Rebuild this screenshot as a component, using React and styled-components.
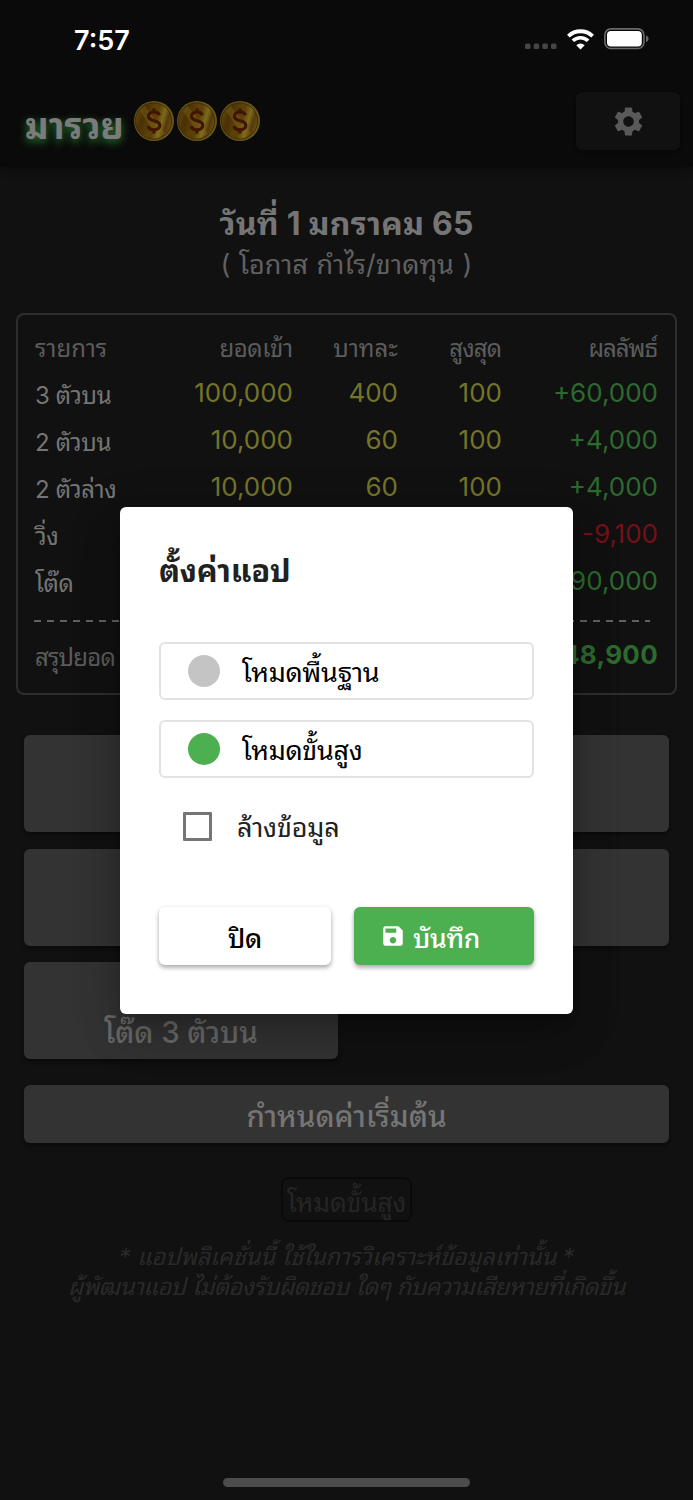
import React from "react";
import styled, { createGlobalStyle } from "styled-components";
import { MdSettings, MdSave } from "react-icons/md";

const fontStack = `Inter, "Noto Sans Thai Looped", "Loma", "Garuda", "Waree", "Noto Sans Thai", sans-serif`;

const Global = createGlobalStyle`
  * { box-sizing: border-box; }
  body { margin: 0; background: #111; }
`;

const Screen = styled.div`
  position: relative;
  width: 693px;
  height: 1500px;
  overflow: hidden;
  background: #111;
  color: #757575;
  font-family: ${fontStack};
  display: flex;
  flex-direction: column;
  white-space: nowrap;
`;

const Header = styled.header`
  height: 167px;
  flex: none;
  background: #0a0a0a;
  box-shadow: 0 3px 8px rgba(0, 0, 0, 0.35);
`;

const StatusBar = styled.div`
  height: 78px;
  padding: 0 44px 0 74px;
  display: flex;
  align-items: center;
  justify-content: space-between;
`;

const Clock = styled.div`
  margin-top: 3px;
  font-size: 27px;
  line-height: 32px;
  font-weight: 600;
  color: #fff;
`;

const StatusIcons = styled.div`
  display: flex;
  align-items: center;
`;

const AppBar = styled.div`
  height: 86px;
  padding: 0 13px 0 25px;
  display: flex;
  align-items: center;
`;

const Brand = styled.h1`
  margin: 9px 0 0;
  width: 109px;
  font-size: 36px;
  line-height: 40px;
  font-weight: 700;
  color: #7b7b7b;
  text-shadow: 0 3px 9px #2c7a30;
`;

const Coins = styled.div`
  display: flex;
  gap: 3px;
  flex: 1;
`;

const SettingsButton = styled.button`
  width: 104px;
  height: 58px;
  border: 0;
  border-radius: 6px;
  background: #111;
  color: #595959;
  display: grid;
  place-items: center;
  box-shadow: 0 2px 3px rgba(0, 0, 0, 0.3);
`;

const Heading = styled.div`
  margin-top: 35px;
  text-align: center;
`;

const DateTitle = styled.h2`
  margin: 0;
  font-size: 32px;
  line-height: 43px;
  font-weight: 700;
  letter-spacing: 0.2px;
`;

const Subtitle = styled.div`
  font-size: 27px;
  line-height: 40px;
  color: #606060;
  word-spacing: 1px;
`;

const Card = styled.section`
  margin: 28px 16px 0;
  width: 661px;
  height: 382px;
  flex: none;
  padding: 10px 16px;
  border: 2px solid #2e2e2e;
  border-radius: 8px;
`;

const Row = styled.div`
  height: ${(p) => (p.$head ? 41 : 47)}px;
  display: grid;
  grid-template-columns: 120px 139px 105px 104px 156px;
  align-items: center;
  text-align: right;
  font-size: 26px;
  line-height: 47px;
  color: ${(p) => (p.$head ? "#5c5c5c" : "#757575")};
`;

const Label = styled.span`
  text-align: left;
  font-size: 24px;
  padding: ${(p) => p.$drop ?? 6}px 0 0 1px;
  color: ${(p) => p.$color || "inherit"};
  letter-spacing: ${(p) => p.$spacing ?? -0.35}px;
`;

const HeadCell = styled.span`
  font-size: 24px;
  margin-right: ${(p) => -(p.$spacing || 0)}px;
  letter-spacing: ${(p) => p.$spacing || 0}px;
`;

const Amount = styled.span`
  color: #74742a;
`;

const Result = styled.span`
  color: ${(p) => (p.$loss ? "#751018" : "#2c6a2e")};
  font-weight: ${(p) => (p.$bold ? 700 : 400)};
  letter-spacing: ${(p) => (p.$bold ? 0.3 : 0)}px;
`;

const Dashes = styled.div`
  height: 2px;
  margin: 19px 0 6px;
  width: 616px;
  background: repeating-linear-gradient(90deg, #616161 0 7px, transparent 7px 13px);
`;

const Tiles = styled.div`
  margin: 40px 24px 0;
  display: grid;
  grid-template-columns: 314px 314px;
  justify-content: space-between;
  grid-auto-rows: 97px;
  gap: 16.5px;
`;

const Tile = styled.button`
  border: 0;
  border-radius: 6px;
  padding: 41px 0 0;
  background: #333;
  color: #6a6a6a;
  font: 500 29.5px/58px ${fontStack};
  letter-spacing: -0.1px;
  box-shadow: 0 3px 4px rgba(0, 0, 0, 0.4);
`;

const WideButton = styled.button`
  flex: none;
  margin: 26px 24px 0;
  height: 58px;
  border: 0;
  border-radius: 6px;
  padding: 2px 0 0;
  background: #333;
  color: #757575;
  font: 500 29.5px/58px ${fontStack};
  box-shadow: 0 3px 4px rgba(0, 0, 0, 0.4);
`;

const ModeBadge = styled.div`
  align-self: center;
  flex: none;
  margin-top: 34px;
  width: 131px;
  height: 45px;
  border: 2px solid #0a0a0a;
  border-radius: 8px;
  font-size: 26.5px;
  letter-spacing: -0.2px;
  line-height: 47px;
  text-align: center;
  color: #252525;
`;

const Disclaimer = styled.p`
  margin: 20px 0 0;
  text-align: center;
  font-size: 23.5px;
  line-height: 30px;
  font-style: italic;
  color: #292929;
`;

const DisclaimerLine = styled.span`
  display: block;
  letter-spacing: ${(p) => p.$spacing || 0}px;
`;

const HomeIndicator = styled.div`
  margin: auto auto 13px;
  width: 247px;
  height: 9px;
  border-radius: 5px;
  background: #4c4c4c;
`;

const Dialog = styled.div`
  position: absolute;
  left: 120px;
  top: 507px;
  width: 453px;
  height: 507px;
  padding: 39px;
  border-radius: 6px;
  background: #fff;
  color: #000;
  display: flex;
  flex-direction: column;
  box-shadow: 0 11px 15px -7px rgba(0, 0, 0, 0.2), 0 24px 38px 3px rgba(0, 0, 0, 0.14),
    0 9px 46px 8px rgba(0, 0, 0, 0.12);
`;

const DialogTitle = styled.h3`
  margin: 0 0 46px;
  font-size: 31px;
  letter-spacing: -0.15px;
  line-height: 50px;
  font-weight: 700;
  color: #212121;
`;

const Option = styled.div`
  height: 58px;
  margin-bottom: 20px;
  padding-left: 27px;
  border: 2px solid #e2e2e2;
  border-radius: 6px;
  display: flex;
  align-items: center;
  gap: 22px;
  font-size: 27px;
  letter-spacing: -0.35px;
  line-height: 50px;
`;

const OptionText = styled.span`
  padding-top: 4px;
`;

const Dot = styled.span`
  width: 32px;
  height: 32px;
  border-radius: 50%;
  background: ${(p) => (p.$on ? "#4caf50" : "#c4c4c4")};
`;

const CheckRow = styled.label`
  height: 56px;
  padding-left: 24px;
  display: flex;
  align-items: center;
  gap: 25px;
  font-size: 27px;
  letter-spacing: -0.2px;
  line-height: 50px;
  color: #212121;
`;

const CheckBox = styled.span`
  width: 29px;
  height: 29px;
  border: 3px solid #757575;
  border-radius: 1px;
`;

const Actions = styled.div`
  display: flex;
  justify-content: space-between;
  margin-top: 53px;
`;

const ActionButton = styled.button`
  width: ${(p) => (p.$primary ? 180 : 172)}px;
  height: 58px;
  border: 0;
  border-radius: 6px;
  padding: ${(p) => (p.$primary ? "0 28px 0 26px" : "0")};
  display: flex;
  align-items: center;
  justify-content: ${(p) => (p.$primary ? "flex-start" : "center")};
  gap: 7px;
  background: ${(p) => (p.$primary ? "#4caf50" : "#fff")};
  color: ${(p) => (p.$primary ? "#fff" : "#000")};
  font: 500 26.5px/50px ${fontStack};
  letter-spacing: -0.3px;
  box-shadow: 0 3px 4px rgba(0, 0, 0, 0.25), 0 1px 5px rgba(0, 0, 0, 0.12);
`;

const ActionText = styled.span`
  padding-top: 4px;
`;

const Coin = ({ id }) => (
  <svg width="40" height="42" viewBox="0 0 40 42">
    <defs>
      <linearGradient id={id} x1="0" y1="0.35" x2="1" y2="0.65">
        <stop offset="0" stopColor="#5e480e" />
        <stop offset="0.2" stopColor="#4a3005" />
        <stop offset="0.42" stopColor="#5a4009" />
        <stop offset="0.55" stopColor="#5c4008" />
        <stop offset="0.72" stopColor="#7c6a1c" />
        <stop offset="0.85" stopColor="#55390a" />
        <stop offset="1" stopColor="#6b5517" />
      </linearGradient>
    </defs>
    <circle cx="20" cy="21" r="20" fill="#6b551b" />
    <circle cx="19.500" cy="21" r="18.200" fill={`url(#${id})`} stroke="#3a2a08" strokeWidth="0.900" />
    <path d="M6 11A17.500 17.500 0 0 1 11 6L31 33.500A17.500 17.500 0 0 1 24 37.500Z" fill="#86701f" opacity="0.35" />
    <path
      d="M25.500 15.200c-.8-2-2.900-3.200-5.500-3.200-3.200 0-5.600 1.700-5.600 4.300 0 6 11.400 3 11.400 9 0 2.600-2.400 4.500-5.800 4.500-3 0-5.300-1.400-6.100-3.700M20 8.500v4M20 29.500v4"
      fill="none"
      stroke="#421500"
      strokeWidth="3.200"
    />
  </svg>
);

const SignalDots = () => (
  <svg width="33" height="22" viewBox="0 0 33 22">
    {[0, 8.7, 17.3, 26].map((x) => (
      <rect key={x} x={x} y="15.500" width="5.500" height="5.500" rx="1.500" fill="#454545" />
    ))}
  </svg>
);

const WifiIcon = styled.svg`
  margin-left: 9px;
`;

const BatteryIcon = styled.svg`
  margin-left: 10px;
`;

const Wifi = () => (
  <WifiIcon width="27" height="21" viewBox="0 0 27 21" fill="none" stroke="#fff">
    <path d="M1.400 7.200A17.300 17.300 0 0 1 25.600 7.200" strokeWidth="3.800" />
    <path d="M5.900 11.800A11 11 0 0 1 21.100 11.800" strokeWidth="3.600" />
    <path d="M13.500 20.500L9.300 16.200A6 6 0 0 1 17.700 16.200Z" fill="#fff" stroke="none" />
  </WifiIcon>
);

const Battery = () => (
  <BatteryIcon width="45" height="22" viewBox="0 0 45 22">
    <rect x="0.900" y="0.900" width="39" height="19.600" rx="6" fill="none" stroke="#69696b" strokeWidth="1.600" />
    <rect x="3" y="3" width="34.800" height="15.400" rx="4" fill="#fff" />
    <path d="M42 7.500c3.400 1 3.400 5.500 0 6.500z" fill="#69696b" />
  </BatteryIcon>
);

const rows = [
  ["3 ตัวบน", "100,000", "400", "100", "+60,000"],
  ["2 ตัวบน", "10,000", "60", "100", "+4,000"],
  ["2 ตัวล่าง", "10,000", "60", "100", "+4,000"],
  ["วิ่ง", "", "", "", "-9,100"],
  ["โต๊ด", "", "", "", "+90,000"],
];

export default function App() {
  return (
    <Screen>
      <Global />
      <Header>
        <StatusBar>
          <Clock>7:57</Clock>
          <StatusIcons>
            <SignalDots />
            <Wifi />
            <Battery />
          </StatusIcons>
        </StatusBar>
        <AppBar>
          <Brand>มารวย</Brand>
          <Coins>
            <Coin id="coin1" />
            <Coin id="coin2" />
            <Coin id="coin3" />
          </Coins>
          <SettingsButton>
            <MdSettings size={35} />
          </SettingsButton>
        </AppBar>
      </Header>

      <Heading>
        <DateTitle>วันที่ 1 มกราคม 65</DateTitle>
        <Subtitle>( โอกาส กำไร/ขาดทุน )</Subtitle>
      </Heading>

      <Card>
        <Row $head>
          <Label $drop={0} $spacing={0}>รายการ</Label>
          <HeadCell $spacing={-0.4}>ยอดเข้า</HeadCell>
          <HeadCell>บาทละ</HeadCell>
          <HeadCell $spacing={-0.9}>สูงสุด</HeadCell>
          <HeadCell $spacing={-1}>ผลลัพธ์</HeadCell>
        </Row>
        {rows.map(([name, total, rate, max, result]) => (
          <Row key={name}>
            <Label>{name}</Label>
            <Amount>{total}</Amount>
            <Amount>{rate}</Amount>
            <Amount>{max}</Amount>
            <Result $loss={result.startsWith("-")}>{result}</Result>
          </Row>
        ))}
        <Dashes />
        <Row>
          <Label $color="#5c5c5c" $spacing={-0.8}>สรุปยอด</Label>
          <span />
          <span />
          <span />
          <Result $bold>+148,900</Result>
        </Row>
      </Card>

      <Tiles>
        <Tile />
        <Tile />
        <Tile />
        <Tile />
        <Tile>โต๊ด 3 ตัวบน</Tile>
      </Tiles>
      <WideButton>กำหนดค่าเริ่มต้น</WideButton>
      <ModeBadge>โหมดขั้นสูง</ModeBadge>
      <Disclaimer>
        <DisclaimerLine $spacing={-0.1}>* แอปพลิเคชั่นนี้ ใช้ในการวิเคราะห์ข้อมูลเท่านั้น *</DisclaimerLine>
        <DisclaimerLine $spacing={-0.45}>ผู้พัฒนาแอป ไม่ต้องรับผิดชอบ ใดๆ กับความเสียหายที่เกิดขึ้น</DisclaimerLine>
      </Disclaimer>
      <HomeIndicator />

      <Dialog role="dialog">
        <DialogTitle>ตั้งค่าแอป</DialogTitle>
        <Option>
          <Dot />
          <OptionText>โหมดพื้นฐาน</OptionText>
        </Option>
        <Option>
          <Dot $on />
          <OptionText>โหมดขั้นสูง</OptionText>
        </Option>
        <CheckRow>
          <CheckBox />
          <OptionText>ล้างข้อมูล</OptionText>
        </CheckRow>
        <Actions>
          <ActionButton>
            <ActionText>ปิด</ActionText>
          </ActionButton>
          <ActionButton $primary>
            <MdSave size={26} />
            <ActionText>บันทึก</ActionText>
          </ActionButton>
        </Actions>
      </Dialog>
    </Screen>
  );
}
